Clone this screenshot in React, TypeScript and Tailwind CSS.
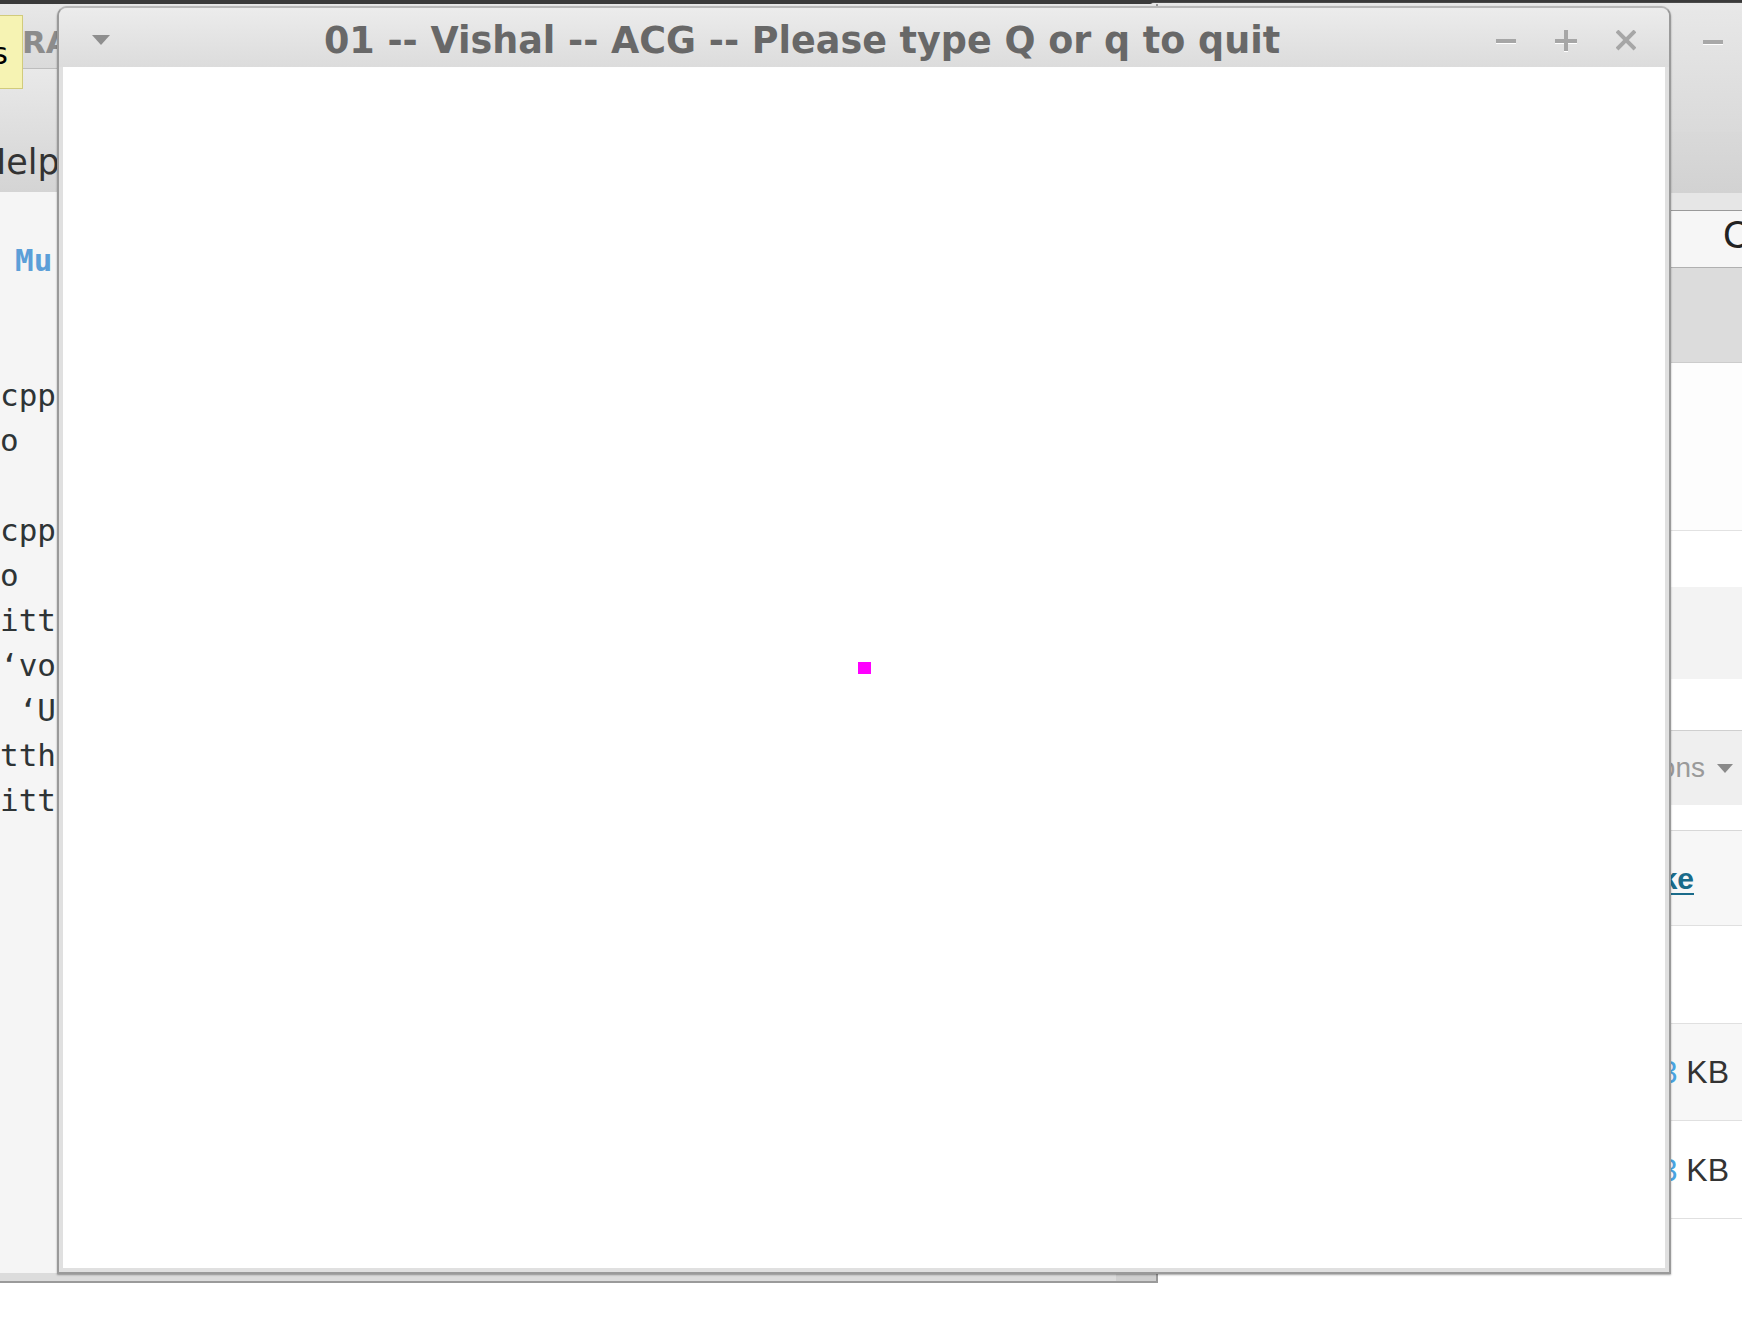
import React from "react";

const codeLines: { text: string; blue?: boolean }[] = [
  { text: "Mu", blue: true },
  { text: "" },
  { text: "" },
  { text: "cpp" },
  { text: "o" },
  { text: "" },
  { text: "cpp" },
  { text: "o" },
  { text: "itt" },
  { text: "\u2018vo" },
  { text: " \u2018U" },
  { text: "tth" },
  { text: "itt" },
];

function TitleButtons() {
  return (
    <div className="flex items-start pt-[24px] pl-[2px] pr-[33px] w-[175px] shrink-0">
      {/* minimize */}
      <svg width="20" height="30" viewBox="0 0 20 30" className="shrink-0">
        <line x1="0" y1="10" x2="20" y2="10" stroke="#ffffff" strokeWidth="4" />
        <line x1="0" y1="9" x2="20" y2="9" stroke="#a6a6a6" strokeWidth="4" />
      </svg>
      {/* maximize */}
      <svg width="22" height="30" viewBox="0 0 22 30" className="shrink-0 ml-[39px] -mt-[3px]">
        <line x1="0" y1="13" x2="22" y2="13" stroke="#ffffff" strokeWidth="4" />
        <line x1="11" y1="2" x2="11" y2="23" stroke="#ffffff" strokeWidth="4" />
        <line x1="0" y1="12" x2="22" y2="12" stroke="#a6a6a6" strokeWidth="4" />
        <line x1="11" y1="1" x2="11" y2="22" stroke="#a6a6a6" strokeWidth="4" />
      </svg>
      {/* close */}
      <svg width="20" height="30" viewBox="0 0 20 30" className="shrink-0 ml-[39px] -mt-[2px]">
        <line x1="1" y1="1" x2="19" y2="19" stroke="#a6a6a6" strokeWidth="4" />
        <line x1="19" y1="1" x2="1" y2="19" stroke="#a6a6a6" strokeWidth="4" />
      </svg>
    </div>
  );
}

export default function App() {
  return (
    <div className="relative w-[1742px] h-[1322px] overflow-hidden bg-white">
      {/* top dark panel edge */}
      <div className="absolute left-0 top-0 w-full h-[4px] bg-[#3a3a3a]" />

      {/* right background window */}
      <div className="absolute left-[1147px] top-[2px] w-[595px] h-[1320px] flex flex-col bg-white rounded-tl-[8px] border-t border-[#4a4a4a] overflow-hidden font-['Liberation_Sans',Arial,sans-serif]">
        <div className="h-[129px] shrink-0 bg-gradient-to-b from-[#e8e8e8] to-[#dadada] pl-[556px] pt-[37px]">
          <div className="w-[20px] h-[4px] bg-[#a8a8a8] border-b border-white box-content" />
        </div>
        <div className="h-[61px] shrink-0 bg-gradient-to-b from-[#d9d9d9] to-[#d2d2d2]" />
        <div className="h-[17px] shrink-0 bg-[#e6e6e6]" />
        <div className="h-[1px] shrink-0 bg-[#9a9a9a]" />
        <div className="h-[56px] shrink-0 bg-[#f6f6f6] flex items-center pl-[576px] pb-[8px] text-[38px] text-[#222] whitespace-nowrap">
          Code
        </div>
        <div className="h-[1px] shrink-0 bg-[#b0b0b0]" />
        <div className="h-[94px] shrink-0 bg-[#dcdcdc]" />
        <div className="h-[1px] shrink-0 bg-[#cccccc]" />
        <div className="h-[167px] shrink-0 bg-[#fdfdfd]" />
        <div className="h-[1px] shrink-0 bg-[#e2e2e2]" />
        <div className="h-[56px] shrink-0 bg-white" />
        <div className="h-[92px] shrink-0 bg-[#f3f3f3]" />
        <div className="h-[51px] shrink-0 bg-white" />
        <div className="h-[1px] shrink-0 bg-[#cfcfcf]" />
        <div className="h-[74px] shrink-0 bg-[#efefef] flex items-center justify-end pr-[9px] text-[28px] text-[#9a9a9a] whitespace-nowrap">
          <span>Actions</span>
          <svg width="16" height="9" viewBox="0 0 16 9" className="ml-[12px]">
            <polygon points="0,0 16,0 8,9" fill="#8a8a8a" />
          </svg>
        </div>
        <div className="h-[25px] shrink-0 bg-white" />
        <div className="h-[1px] shrink-0 bg-[#d8d8d8]" />
        <div className="h-[94px] shrink-0 bg-[#f7f7f7] flex items-center justify-end pr-[48px] text-[30px] font-bold text-[#1a6b8a] whitespace-nowrap">
          <span className="underline decoration-2 underline-offset-4">Make</span>
        </div>
        <div className="h-[1px] shrink-0 bg-[#e0e0e0]" />
        <div className="h-[97px] shrink-0 bg-white" />
        <div className="h-[1px] shrink-0 bg-[#e0e0e0]" />
        <div className="h-[96px] shrink-0 bg-[#f7f7f7] flex items-center justify-end pr-[13px] text-[32px] text-[#333] whitespace-nowrap">
          <span className="text-[#4aa3df]">12.3</span>
          <span>&nbsp;KB</span>
        </div>
        <div className="h-[1px] shrink-0 bg-[#e0e0e0]" />
        <div className="h-[97px] shrink-0 bg-white flex items-center justify-end pr-[13px] text-[32px] text-[#333] whitespace-nowrap">
          <span className="text-[#4aa3df]">45.3</span>
          <span>&nbsp;KB</span>
        </div>
        <div className="h-[1px] shrink-0 bg-[#e0e0e0]" />
        <div className="flex-1 bg-white" />
      </div>

      {/* left background window */}
      <div className="absolute left-0 top-[4px] w-[1158px] h-[1279px] flex flex-col bg-[#dcdcdc] border-r-2 border-b-2 border-[#9a9a9a] pb-[6px] overflow-hidden">
        <div className="h-[64px] shrink-0 bg-gradient-to-b from-[#e8e8e8] to-[#dadada] pl-[22px] pt-[23px]">
          <div className="font-['DejaVu_Sans',sans-serif] font-bold text-[31px] leading-[31px] text-[#8c8c8c] whitespace-nowrap">
            RAM
          </div>
        </div>
        <div className="h-[1px] shrink-0 bg-[#bdbdbd]" />
        <div className="h-[123px] shrink-0 bg-gradient-to-b from-[#e9e9e9] to-[#d4d4d4] pt-[76px] -ml-[20px]">
          <div className="font-['DejaVu_Sans',sans-serif] text-[35px] leading-[35px] text-[#333]">Help</div>
        </div>
        <div className="flex-1 bg-[#f5f5f5] pt-[46px] font-['DejaVu_Sans_Mono',monospace] text-[31px] leading-[45px] text-[#2e3436] whitespace-pre">
          {codeLines.map((l, i) =>
            l.blue ? (
              <div key={i} className="h-[45px] pl-[15px] font-bold text-[#5c9fd8]">
                {l.text}
              </div>
            ) : (
              <div key={i} className="h-[45px]">
                {l.text}
              </div>
            )
          )}
        </div>
        <div className="h-[2px] shrink-0 flex justify-end">
          <div className="w-[40px] h-[8px] bg-[#cfcfcf]" />
        </div>
      </div>

      {/* tooltip over left window title */}
      <div className="absolute left-[-100px] top-[15px] w-[123px] h-[74px] bg-[#f6f3b3] border border-[#d1cb7c] flex justify-end pr-[14px] pt-[23px] font-['DejaVu_Sans',sans-serif] text-[30px] leading-[30px] text-black">
        Tools
      </div>

      {/* main window */}
      <div className="absolute left-[57px] top-[6px] w-[1614px] h-[1268px] flex flex-col rounded-t-[10px] border-2 border-[#9a9a9a] border-t-[#b8b8b8] bg-[#e0e0e0] px-[4px] pb-[4px] shadow-[0_1px_2px_rgba(0,0,0,0.35)]">
        <div className="h-[59px] shrink-0 -mx-[4px] flex items-start rounded-t-[8px] bg-gradient-to-b from-[#ececec] to-[#dcdcdc]">
          <div className="w-[51px] shrink-0 pl-[33px] pt-[27px]">
            <svg width="18" height="10" viewBox="0 0 18 10">
              <polygon points="0,0 18,0 9,10" fill="#8e8e8e" />
            </svg>
          </div>
          <div className="flex-1 text-center pt-[15px] font-['DejaVu_Sans',sans-serif] font-bold text-[36.5px] leading-[36px] text-[#686868] whitespace-nowrap">
            01 -- Vishal -- ACG -- Please type Q or q to quit
          </div>
          <TitleButtons />
        </div>
        <div className="flex-1 bg-white flex items-center justify-center">
          <div className="w-[13px] h-[12px] bg-[#ff00ff]" />
        </div>
      </div>
    </div>
  );
}
